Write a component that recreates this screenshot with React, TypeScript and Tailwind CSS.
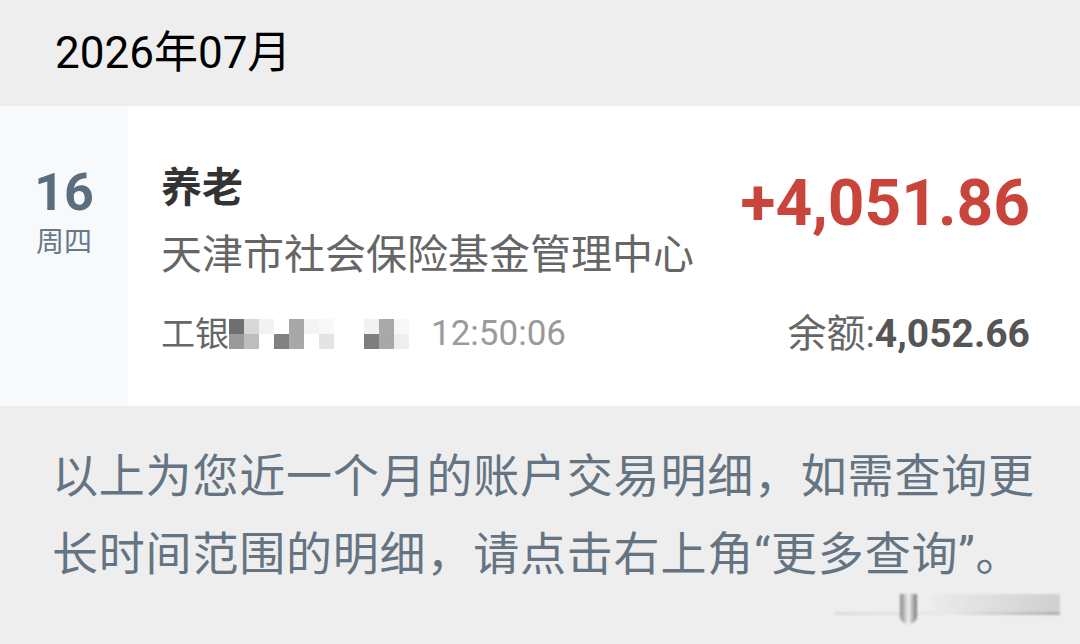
import React from 'react'

const sans = "font-['Roboto','Noto_Sans_CJK_SC',sans-serif]"

// masked account number, drawn as a coarse mosaic
const mosaic = [
  ['bg-[#707070]', 'bg-[#d8d8d8]', 'bg-[#f2f2f2]', 'bg-white', 'bg-[#a8a8a8]', 'bg-[#f4f4f4]', 'bg-[#f8f8f8]', 'bg-white', 'bg-white', 'bg-[#f2f2f2]', 'bg-[#a9a9a9]', 'bg-[#f8f8f8]'],
  ['bg-[#9a9a9a]', 'bg-[#bdbdbd]', 'bg-white', 'bg-[#818181]', 'bg-[#a8a8a8]', 'bg-white', 'bg-[#e4e4e4]', 'bg-white', 'bg-white', 'bg-[#7e7e7e]', 'bg-[#a8a8a8]', 'bg-[#eeeeee]'],
]

function Mosaic() {
  return (
    <div className="flex flex-col">
      {mosaic.map((row, r) => (
        <div key={r} className="flex">
          {row.map((c, i) => (
            <div key={i} className={`w-[15px] h-[15px] ${c}`} />
          ))}
        </div>
      ))}
    </div>
  )
}

function TransactionRow() {
  return (
    <div className="flex h-[300px] bg-white">
      <div className="w-[128px] bg-[#f8f9fa] flex flex-col items-center pt-[57px]">
        <div className={`${sans} text-[52px] leading-[60px] font-bold text-[#5b6e80]`}>16</div>
        <div className={`${sans} text-[28px] leading-[36px] text-[#67788a] mt-[2px]`}>周四</div>
      </div>

      <div className="flex-1 flex justify-between pl-[33px] pr-[50px]">
        <div className="flex flex-col pt-[54px]">
          <div className={`${sans} text-[41px] leading-[56px] font-bold text-[#333333]`}>养老</div>
          <div className={`${sans} text-[41px] leading-[56px] text-[#666666] mt-[11px]`}>天津市社会保险基金管理中心</div>
          <div className="flex items-center mt-[27px] h-[48px]">
            <span className={`${sans} text-[34px] leading-[48px] text-[#666666]`}>工银</span>
            <Mosaic />
            <span className={`${sans} text-[35px] leading-[48px] text-[#9a9a9a] ml-[22px]`}>12:50:06</span>
          </div>
        </div>

        <div className="flex flex-col items-end pt-[66px]">
          <div className={`${sans} text-[64px] leading-[64px] font-bold text-[#c9443b]`}>+4,051.86</div>
          <div className={`${sans} text-[39px] leading-[48px] text-[#555555] mt-[74px]`}>
            <span className="text-[#666666] font-normal">余额:</span>
            <span className="font-bold">4,052.66</span>
          </div>
        </div>
      </div>
    </div>
  )
}

export default function App() {
  return (
    <div className="relative w-[1080px] h-[644px] bg-[#eeeeee] overflow-hidden">
      <div className={`${sans} h-[106px] flex items-center pl-[55px] text-[44px] text-black`}>
        2026年07月
      </div>

      <TransactionRow />

      <div className={`${sans} px-[52px] pt-[31px] text-[46px] leading-[78px] tracking-[0.8px] text-[#647482]`}>
        <div className="whitespace-nowrap">以上为您近一个月的账户交易明细，如需查询更</div>
        <div className="whitespace-nowrap">长时间范围的明细，请点击右上角“更多查询”。</div>
      </div>

      {/* faint watermark in the lower right corner */}
      <div className="absolute left-[835px] top-[590px] w-[225px] h-[36px] blur-[0.8px] opacity-80">
        <div className="absolute left-0 right-0 top-[22px] h-[3px] bg-gradient-to-r from-[#d6d6d6] via-[#e8e8e8] to-[#a0a0a0]" />
        <div className="absolute left-[95px] right-0 top-[4px] h-[18px] bg-gradient-to-r from-[#ececec] to-[#c8c8c8]" />
        <div className="absolute left-[65px] top-[4px] w-[17px] h-[30px] rounded-b-[8px] bg-gradient-to-r from-[#707070] via-[#f4f4f4] to-[#606060]" />
      </div>
    </div>
  )
}
